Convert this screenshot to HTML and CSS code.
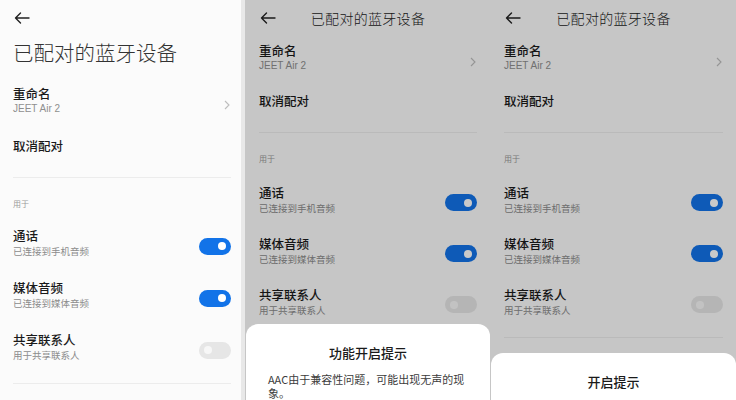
FILE: index.html
```html
<!DOCTYPE html>
<html lang="zh">
<head>
    <meta charset="UTF-8">
    <meta name="viewport" content="width=device-width, initial-scale=1.0">
    <title>已配对的蓝牙设备</title>
    <link rel="stylesheet" href="styles.css">
</head>
<body>
    <div class="screens">
        <!-- 1: 大标题页面 -->
        <div class="phone phone-large">
            <div class="topbar">
                <svg class="back" width="16" height="12" viewBox="0 0 16 12"><path d="M15 6H1.5M6.5 1L1.5 6L6.5 11" fill="none" stroke="#222" stroke-width="1.4" stroke-linecap="round" stroke-linejoin="round"/></svg>
            </div>
            <h1 class="big-title">已配对的蓝牙设备</h1>
            <div class="row rename">
                <div>
                    <div class="name">重命名</div>
                    <div class="sub">JEET Air 2</div>
                </div>
                <svg class="chevron" width="6" height="10" viewBox="0 0 6 10"><path d="M1 1L5 5L1 9" fill="none" stroke="#bdbdbd" stroke-width="1.1"/></svg>
            </div>
            <div class="row cancel"><div class="name">取消配对</div></div>
            <div class="divider"></div>
            <div class="section">用于</div>
            <div class="item">
                <div>
                    <div class="name">通话</div>
                    <div class="sub">已连接到手机音频</div>
                </div>
                <span class="toggle on"></span>
            </div>
            <div class="item">
                <div>
                    <div class="name">媒体音频</div>
                    <div class="sub">已连接到媒体音频</div>
                </div>
                <span class="toggle on"></span>
            </div>
            <div class="item">
                <div>
                    <div class="name">共享联系人</div>
                    <div class="sub">用于共享联系人</div>
                </div>
                <span class="toggle off"></span>
            </div>
            <div class="divider bottom"></div>
        </div>

        <!-- 2: 功能开启提示 -->
        <div class="phone phone-small">
            <div class="topbar">
                <svg class="back" width="16" height="12" viewBox="0 0 16 12"><path d="M15 6H1.5M6.5 1L1.5 6L6.5 11" fill="none" stroke="#222" stroke-width="1.4" stroke-linecap="round" stroke-linejoin="round"/></svg>
                <span class="bar-title">已配对的蓝牙设备</span>
            </div>
            <div class="row rename">
                <div>
                    <div class="name">重命名</div>
                    <div class="sub">JEET Air 2</div>
                </div>
                <svg class="chevron" width="6" height="10" viewBox="0 0 6 10"><path d="M1 1L5 5L1 9" fill="none" stroke="#bdbdbd" stroke-width="1.1"/></svg>
            </div>
            <div class="row cancel"><div class="name">取消配对</div></div>
            <div class="divider"></div>
            <div class="section">用于</div>
            <div class="item">
                <div>
                    <div class="name">通话</div>
                    <div class="sub">已连接到手机音频</div>
                </div>
                <span class="toggle on"></span>
            </div>
            <div class="item">
                <div>
                    <div class="name">媒体音频</div>
                    <div class="sub">已连接到媒体音频</div>
                </div>
                <span class="toggle on"></span>
            </div>
            <div class="item">
                <div>
                    <div class="name">共享联系人</div>
                    <div class="sub">用于共享联系人</div>
                </div>
                <span class="toggle off"></span>
            </div>
            <div class="divider bottom"></div>
            <div class="dim"></div>
            <div class="sheet sheet-tall">
                <div class="sheet-title">功能开启提示</div>
                <p class="sheet-text">AAC由于兼容性问题，可能出现无声的现象。</p>
            </div>
        </div>

        <!-- 3: 开启提示 -->
        <div class="phone phone-small last">
            <div class="topbar">
                <svg class="back" width="16" height="12" viewBox="0 0 16 12"><path d="M15 6H1.5M6.5 1L1.5 6L6.5 11" fill="none" stroke="#222" stroke-width="1.4" stroke-linecap="round" stroke-linejoin="round"/></svg>
                <span class="bar-title">已配对的蓝牙设备</span>
            </div>
            <div class="row rename">
                <div>
                    <div class="name">重命名</div>
                    <div class="sub">JEET Air 2</div>
                </div>
                <svg class="chevron" width="6" height="10" viewBox="0 0 6 10"><path d="M1 1L5 5L1 9" fill="none" stroke="#bdbdbd" stroke-width="1.1"/></svg>
            </div>
            <div class="row cancel"><div class="name">取消配对</div></div>
            <div class="divider"></div>
            <div class="section">用于</div>
            <div class="item">
                <div>
                    <div class="name">通话</div>
                    <div class="sub">已连接到手机音频</div>
                </div>
                <span class="toggle on"></span>
            </div>
            <div class="item">
                <div>
                    <div class="name">媒体音频</div>
                    <div class="sub">已连接到媒体音频</div>
                </div>
                <span class="toggle on"></span>
            </div>
            <div class="item">
                <div>
                    <div class="name">共享联系人</div>
                    <div class="sub">用于共享联系人</div>
                </div>
                <span class="toggle off"></span>
            </div>
            <div class="divider bottom"></div>
            <div class="dim"></div>
            <div class="sheet sheet-short">
                <div class="sheet-title">开启提示</div>
            </div>
        </div>
    </div>
</body>
</html>
```

FILE: styles.css
```css
body {
    margin: 0;
    background-color: #e8e8e8;
    font-family: "Noto Sans CJK SC", "Noto Sans", sans-serif;
    color: #1f1f1f;
}

.screens {
    display: flex;
    width: 736px;
    height: 400px;
    overflow: hidden;
}

.phone {
    position: relative;
    background: #fbfbfb;
    height: 400px;
    overflow: hidden;
    box-sizing: border-box;
}

.phone-large {
    width: 241px;
    margin-right: 4px;
    padding: 0 10px 0 13px;
}

.phone-small {
    width: 245px;
    padding: 0 13px 0 14px;
}

.phone-small.last {
    width: 246px;
}

.topbar {
    height: 36px;
    display: flex;
    align-items: center;
    position: relative;
}

.back {
    display: block;
    margin-left: 1px;
}

.bar-title {
    position: absolute;
    left: 0;
    right: 0;
    text-align: center;
    font-size: 14px;
    font-weight: 300;
    letter-spacing: 0.3px;
    color: #222;
    pointer-events: none;
}

.big-title {
    margin: 2px 0 0;
    font-size: 20.5px;
    line-height: 28px;
    font-weight: 300;
    color: #333;
}

.row, .item {
    display: flex;
    align-items: center;
    justify-content: space-between;
}

.name {
    font-size: 12.5px;
    line-height: 17px;
    font-weight: 500;
    color: #1a1a1a;
}

.sub {
    font-size: 9.5px;
    line-height: 12px;
    color: #8c8c8c;
    margin-top: 1px;
}

.rename .sub {
    font-family: "Liberation Sans", Arial, sans-serif;
    font-size: 10px;
    color: #8f8f8f;
}

.phone-large .rename {
    padding: 19px 0 10px;
}

.phone-small .rename {
    padding: 6px 0 9px;
}

.chevron {
    margin-right: 1px;
    margin-top: 10px;
}

.phone-large .cancel {
    padding: 12px 0 23px;
}

.phone-small .cancel {
    padding: 11px 0 23px;
}

.divider {
    height: 1px;
    background: #ececec;
}

.section {
    font-size: 8px;
    line-height: 12px;
    color: #9a9a9a;
}

.phone-large .section {
    margin: 20px 0 6px;
}

.phone-small .section {
    margin: 20px 0 8px;
}

.item {
    height: 51px;
}

.phone-large .item {
    height: 52px;
}

.divider.bottom {
    margin-top: 11px;
}

.toggle {
    position: relative;
    width: 32px;
    height: 17px;
    border-radius: 9px;
    background: #e6e6e6;
    flex-shrink: 0;
    margin-top: 8px;
}

.toggle::after {
    content: "";
    position: absolute;
    top: 4.5px;
    left: 5px;
    width: 8px;
    height: 8px;
    border-radius: 50%;
    background: #f7f7f7;
}

.toggle.on {
    background: #1273e8;
}

.toggle.on::after {
    left: auto;
    right: 5px;
    background: #fff;
}

.dim {
    position: absolute;
    top: 0;
    left: 0;
    right: 0;
    bottom: 0;
    background: rgba(0, 0, 0, 0.21);
}

.sheet {
    position: absolute;
    left: 1px;
    right: 0;
    bottom: 0;
    background: #fff;
    border-radius: 12px 12px 0 0;
    box-sizing: border-box;
}

.sheet-tall {
    top: 324px;
    padding: 20px 22px 0;
}

.sheet-short {
    top: 353px;
    padding: 20px 22px 0;
}

.sheet-title {
    text-align: center;
    font-size: 13px;
    line-height: 17px;
    font-weight: 500;
    color: #1a1a1a;
}

.sheet-text {
    margin: 11px 0 0;
    font-size: 11px;
    line-height: 14px;
    color: #3c3c3c;
}
```
